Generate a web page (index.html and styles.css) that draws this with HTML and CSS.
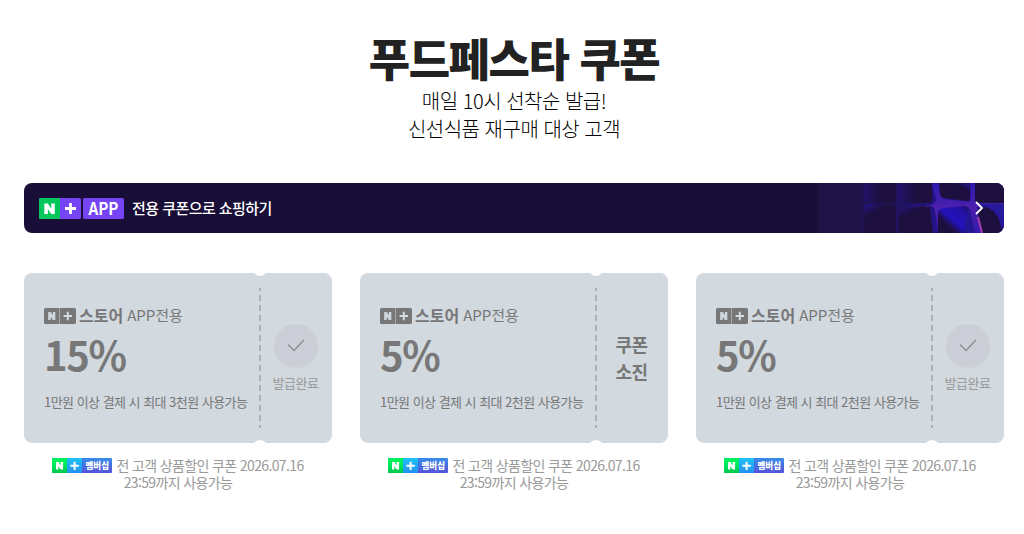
FILE: index.html
```html
<!DOCTYPE html>
<html lang="ko">
<head>
    <meta charset="UTF-8">
    <meta name="viewport" content="width=device-width, initial-scale=1.0">
    <title>푸드페스타 쿠폰</title>
    <link rel="stylesheet" href="styles.css">
</head>
<body>
    <svg class="symbols" width="0" height="0">
        <symbol id="store-logo" viewBox="0 0 32 16">
            <rect width="32" height="16" rx="1.5" fill="#777"/>
            <path d="M15.5 0v16" stroke="#a5a9ac"/>
            <path d="M4.2 4h2.5l2.1 3.3V4h2.5v8H8.9L6.7 8.7V12H4.2z" fill="#d2d9df"/>
            <path d="M23.8 3.8v8.4M19.6 8h8.4" stroke="#d2d9df" stroke-width="2"/>
        </symbol>
        <symbol id="member-logo" viewBox="0 0 60 15">
            <rect width="60" height="15" rx="1" fill="url(#purple)"/>
            <path d="M1 0h14v15H1a1 1 0 0 1-1-1V1a1 1 0 0 1 1-1z" fill="url(#green)"/>
            <path d="M15 0h15v15H15z" fill="url(#sky)"/>
            <path d="M4 4h2.4l2.3 3.3V4h2.4v7.6H8.8L6.4 8.2v3.4H4z" fill="#fff"/>
            <path d="M22.6 3.7v8.2M18.4 7.8h8.4" stroke="#fff" stroke-width="2"/>
            <text x="33.5" y="11.2" textLength="23.5" lengthAdjust="spacingAndGlyphs" class="member-text">멤버십</text>
        </symbol>
        <symbol id="check" viewBox="0 0 18 13">
            <path d="M1 5.5l6 6L17 1" fill="none" stroke="#8b8d90" stroke-width="1.3"/>
        </symbol>
        <defs>
            <linearGradient id="green" x1="0" y1="0" x2="0" y2="1"><stop offset=".3" stop-color="#00f05c"/><stop offset="1" stop-color="#00c850"/></linearGradient>
            <linearGradient id="sky" x1="0" y1="0" x2="0" y2="1"><stop offset="0" stop-color="#1fc2f8"/><stop offset="1" stop-color="#1f91f4"/></linearGradient>
            <linearGradient id="purple" x1="0" y1="0" x2="0" y2="1"><stop offset="0" stop-color="#398cec"/><stop offset="1" stop-color="#5552d8"/></linearGradient>
        </defs>
    </svg>

    <header>
        <h1>푸드페스타 쿠폰</h1>
        <p>매일 10시 선착순 발급!<br>신선식품 재구매 대상 고객</p>
    </header>

    <a class="banner">
        <svg class="banner-logo" width="85" height="21" viewBox="0 0 85 21">
            <rect width="42" height="21" rx="1.5" fill="#7444f5"/>
            <path d="M1.5 0H21v21H1.5A1.5 1.5 0 0 1 0 19.5v-18A1.5 1.5 0 0 1 1.5 0z" fill="#03c75a"/>
            <rect x="44" width="41" height="21" rx="1.5" fill="#7444f5"/>
            <path d="M5.3 5.5h3.5l3.4 4.9V5.5h3.6v10.6h-3.5l-3.4-4.9v4.9H5.3z" fill="#fff"/>
            <path d="M31.5 5v11M26 10.5h11" stroke="#fff" stroke-width="2.8"/>
            <text x="49.5" y="17" textLength="30" lengthAdjust="spacingAndGlyphs" class="app-text">APP</text>
        </svg>
        <span class="banner-text">전용 쿠폰으로 쇼핑하기</span>
        <svg class="banner-art" width="186" height="50" viewBox="0 0 186 50">
            <defs>
                <linearGradient id="glow"><stop offset="0" stop-color="#1f1247"/><stop offset=".35" stop-color="#20124f"/><stop offset=".65" stop-color="#231388"/><stop offset="1" stop-color="#281a9c"/></linearGradient>
                <linearGradient id="tile"><stop offset="0" stop-color="#22126a"/><stop offset=".5" stop-color="#1d103f"/></linearGradient>
                <linearGradient id="lower" x1="0" y1="0" x2=".6" y2="1"><stop offset="0" stop-color="#241388"/><stop offset=".35" stop-color="#1d103f"/></linearGradient>
                <linearGradient id="blue" x1="0" y1="1" x2="1" y2="0"><stop offset="0" stop-color="#1d103f"/><stop offset=".3" stop-color="#1d103f"/><stop offset=".5" stop-color="#2411bb"/><stop offset=".8" stop-color="#2411a8"/><stop offset="1" stop-color="#211060"/></linearGradient>
                <linearGradient id="beam" x1="0" y1="0" x2="0" y2="1"><stop offset="0" stop-color="#2d18b0"/><stop offset=".5" stop-color="#4d20ad"/><stop offset="1" stop-color="#3519ad"/></linearGradient>
            </defs>
            <rect width="186" height="50" fill="url(#glow)"/>
            <path d="M0 0h42v18q0 2-2 2H0zM0 21h40q2 1 2 4v25H0z" fill="#1f1247"/>
            <path d="M46 0h32v17q0 3-3 3H49q-3 0-3-3z" fill="url(#tile)"/>
            <path d="M46 50V25q0-4 4-4h25q3 0 3 4v25z" fill="url(#lower)"/>
            <path d="M81 0h33v17q0 3-3 3H84q-3 0-3-3z" fill="url(#tile)"/>
            <path d="M81 50V31q0-4 5-5l25-4q1 0 1 4l3 24z" fill="url(#lower)"/>
            <path d="M114 0h7q0 14 4 16l25 3q3 0 3-5V0h4v17q0 3 5 3h24v1h-23q-5 0-3 9l6 20h-9l-5-24q-1-3-6-2l-15 2q-6 1-6 8l-1 16h-4l-3-22q0-5-4-5l-6 1v-1l6-1q5-1 5-6z" fill="url(#beam)"/>
            <path d="M121 0h31v14q0 4-3 4l-23-3q-4-1-4-5z" fill="#1d103f"/>
            <path d="M139 0h13v7z" fill="#21126c"/>
            <path d="M120 50V31q0-5 5-6l20-2q6 0 5 5l-4 22z" fill="url(#blue)"/>
            <path d="M157 0h29v20h-25q-4 0-4-4z" fill="#1d103f"/>
            <path d="M164 50l-4-20q-1-6 4-6l8 1q11 5 14 25z" fill="#1d103f"/>
            <path d="M171 24q12 7 13 22" fill="none" stroke="#2b16a2" stroke-width="1.5"/>
            <path d="M160 34l4 16" stroke="#a23caa" stroke-width="2"/>
            <path d="M158 19l6 6-6 6" fill="none" stroke="#fff" stroke-width="1.8"/>
        </svg>
    </a>

    <ul class="coupons">
        <li class="coupon">
            <div class="ticket">
                <div class="ticket-body">
                    <div class="brand"><svg width="32" height="16"><use href="#store-logo"/></svg><b>스토어</b><span>APP전용</span></div>
                    <strong class="discount">15%</strong>
                    <p class="condition">1만원 이상 결제 시 최대 3천원 사용가능</p>
                </div>
                <div class="ticket-side">
                    <span class="circle"><svg width="18" height="13"><use href="#check"/></svg></span>
                    <span class="done">발급완료</span>
                </div>
            </div>
            <p class="notice"><svg width="60" height="15"><use href="#member-logo"/></svg>전 고객 상품할인 쿠폰 2026.07.16<br>23:59까지 사용가능</p>
        </li>
        <li class="coupon">
            <div class="ticket">
                <div class="ticket-body">
                    <div class="brand"><svg width="32" height="16"><use href="#store-logo"/></svg><b>스토어</b><span>APP전용</span></div>
                    <strong class="discount">5%</strong>
                    <p class="condition">1만원 이상 결제 시 최대 2천원 사용가능</p>
                </div>
                <div class="ticket-side">
                    <strong class="soldout">쿠폰<br>소진</strong>
                </div>
            </div>
            <p class="notice"><svg width="60" height="15"><use href="#member-logo"/></svg>전 고객 상품할인 쿠폰 2026.07.16<br>23:59까지 사용가능</p>
        </li>
        <li class="coupon">
            <div class="ticket">
                <div class="ticket-body">
                    <div class="brand"><svg width="32" height="16"><use href="#store-logo"/></svg><b>스토어</b><span>APP전용</span></div>
                    <strong class="discount">5%</strong>
                    <p class="condition">1만원 이상 결제 시 최대 2천원 사용가능</p>
                </div>
                <div class="ticket-side">
                    <span class="circle"><svg width="18" height="13"><use href="#check"/></svg></span>
                    <span class="done">발급완료</span>
                </div>
            </div>
            <p class="notice"><svg width="60" height="15"><use href="#member-logo"/></svg>전 고객 상품할인 쿠폰 2026.07.16<br>23:59까지 사용가능</p>
        </li>
    </ul>
</body>
</html>
```

FILE: styles.css
```css
* {
    box-sizing: border-box;
    margin: 0;
    padding: 0;
}
body {
    padding: 29px 20px 0 24px;
    background: #fff;
    color: #222;
    font-family: 'Noto Sans CJK KR', sans-serif;
    overflow: hidden;
}
.symbols {
    display: block;
}
header {
    text-align: center;
    height: 154px;
}
header h1 {
    height: 58px;
    font-size: 45px;
    font-weight: 900;
    line-height: 57px;
    letter-spacing: -1.5px;
}
header p {
    font-size: 20px;
    font-weight: 300;
    line-height: 28px;
    letter-spacing: -0.5px;
    color: #000;
}
.banner {
    display: flex;
    align-items: center;
    height: 50px;
    padding-left: 15px;
    background: #190e38;
    border-radius: 8px;
    overflow: hidden;
}
.app-text {
    font-size: 17px;
    font-weight: 700;
    fill: #fff;
}
.banner-text {
    margin: 0 0 2px 8px;
    color: #fff;
    font-size: 15px;
    font-weight: 500;
    letter-spacing: -0.55px;
    white-space: nowrap;
}
.banner-art {
    margin-left: auto;
}
.coupons {
    display: grid;
    grid-template-columns: repeat(3, 308px);
    gap: 28px;
    margin-top: 40px;
    list-style: none;
}
.ticket {
    position: relative;
    display: flex;
    height: 170px;
    background: #d2d9df;
    border-radius: 8px;
    overflow: hidden;
    color: #777;
}
/* half circle notches above and below the dashed line */
.ticket::before,
.ticket::after {
    content: "";
    position: absolute;
    left: 229px;
    width: 14px;
    height: 14px;
    border-radius: 50%;
    background: #fff;
}
.ticket::before {
    top: -11px;
}
.ticket::after {
    bottom: -11px;
}
.ticket-body {
    width: 235px;
    padding: 31px 0 0 20px;
    white-space: nowrap;
}
.brand {
    display: flex;
    align-items: center;
    height: 24px;
    font-size: 15px;
    letter-spacing: 0;
}
.brand b {
    margin: 0 4px 2px 3px;
    font-size: 16px;
    letter-spacing: 0;
}
.brand span {
    margin-bottom: 3px;
}
.discount {
    display: block;
    height: 58px;
    font-size: 40px;
    font-weight: 700;
    line-height: 52px;
    letter-spacing: -1.4px;
}
.condition {
    font-size: 13px;
    line-height: 32px;
    letter-spacing: -0.53px;
}
.ticket-side {
    flex: 1;
    display: flex;
    flex-direction: column;
    align-items: center;
    justify-content: center;
    background: repeating-linear-gradient(#b0b0b2 0 3px, transparent 3px 7px, #b0b0b2 7px 10px) 0 15px / 2px 140px no-repeat;
}
.circle {
    display: flex;
    align-items: center;
    justify-content: center;
    width: 44px;
    height: 44px;
    border-radius: 50%;
    background: #cccfd8;
}
.done {
    margin-top: 5px;
    color: #999;
    font-size: 13px;
    line-height: 20px;
    letter-spacing: -0.4px;
}
.soldout {
    font-size: 18px;
    line-height: 27px;
    letter-spacing: -0.6px;
}
.notice {
    margin-top: 14px;
    text-align: center;
    color: #999;
    font-size: 14px;
    line-height: 17px;
    letter-spacing: -0.63px;
}
.notice svg {
    margin-right: 4px;
    vertical-align: -2px;
}
.member-text {
    font-size: 9px;
    font-weight: 900;
    letter-spacing: 0;
    fill: #fff;
}
```
